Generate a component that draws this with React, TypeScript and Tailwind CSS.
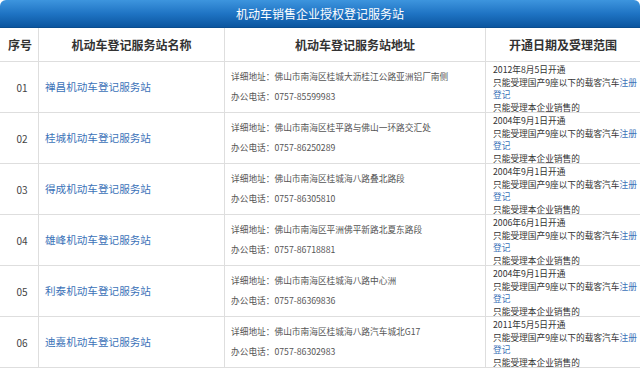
import React from "react";

const rows = [
  { no: "01", name: "禅昌机动车登记服务站", addr: "佛山市南海区桂城大沥桂江公路亚洲铝厂南侧", tel: "0757-85599983", date: "2012年8月5日开通" },
  { no: "02", name: "桂城机动车登记服务站", addr: "佛山市南海区桂平路与佛山一环路交汇处", tel: "0757-86250289", date: "2004年9月1日开通" },
  { no: "03", name: "得成机动车登记服务站", addr: "佛山市南海区桂城海八路叠北路段", tel: "0757-86305810", date: "2004年9月1日开通" },
  { no: "04", name: "雄峰机动车登记服务站", addr: "佛山市南海区平洲佛平新路北夏东路段", tel: "0757-86718881", date: "2006年6月1日开通" },
  { no: "05", name: "利泰机动车登记服务站", addr: "佛山市南海区桂城海八路中心洲", tel: "0757-86369836", date: "2004年9月1日开通" },
  { no: "06", name: "迪嘉机动车登记服务站", addr: "佛山市南海区桂城海八路汽车城北G17", tel: "0757-86302983", date: "2011年5月5日开通" },
];

const font = { fontFamily: '"Noto Sans CJK SC", "Noto Sans", sans-serif' };

export default function App() {
  return (
    <div className="w-[640px] h-[369px] bg-white overflow-hidden" style={font}>
      <div className="h-[28px] rounded-t-[6px] bg-gradient-to-b from-[#3d95de] via-[#1f74c4] to-[#0b56a0] border-b border-[#0a4d8f] flex items-center justify-center text-white text-[12px]">
        机动车销售企业授权登记服务站
      </div>
      <div className="grid grid-cols-[39px_186px_261px_154px] h-[34px] border-b border-[#dedede] text-[12px] font-bold text-[#333]">
        <div className="flex items-center justify-center border-r border-[#dedede] pl-[2px]">序号</div>
        <div className="flex items-center justify-center border-r border-[#dedede]">机动车登记服务站名称</div>
        <div className="flex items-center justify-center border-r border-[#dedede]">机动车登记服务站地址</div>
        <div className="flex items-center justify-center">开通日期及受理范围</div>
      </div>
      {rows.map((r) => (
        <div key={r.no} className="grid grid-cols-[39px_186px_261px_154px] h-[51px] border-b border-[#dedede]">
          <div className="flex items-center justify-center border-r border-[#dedede] text-[10px] text-[#444] pl-[6px]">{r.no}</div>
          <div className="flex items-center border-r border-[#dedede] pl-[6px] text-[10.6px] text-[#3b72b8]">{r.name}</div>
          <div className="flex flex-col justify-center gap-[8px] border-r border-[#dedede] pl-[6px] text-[8.7px] leading-[12px] text-[#555]">
            <div className="whitespace-nowrap">详细地址：{r.addr}</div>
            <div className="whitespace-nowrap">办公电话：{r.tel}</div>
          </div>
          <div className="pl-[7px] pt-[2px] text-[8.7px] leading-[12.5px] text-[#333] overflow-hidden">
            <div className="whitespace-nowrap">{r.date}</div>
            <div className="whitespace-nowrap">
              只能受理国产9座以下的载客汽车<span className="text-[#3b72b8]">注册</span>
            </div>
            <div className="whitespace-nowrap text-[#3b72b8]">登记</div>
            <div className="whitespace-nowrap">只能受理本企业销售的</div>
          </div>
        </div>
      ))}
    </div>
  );
}
